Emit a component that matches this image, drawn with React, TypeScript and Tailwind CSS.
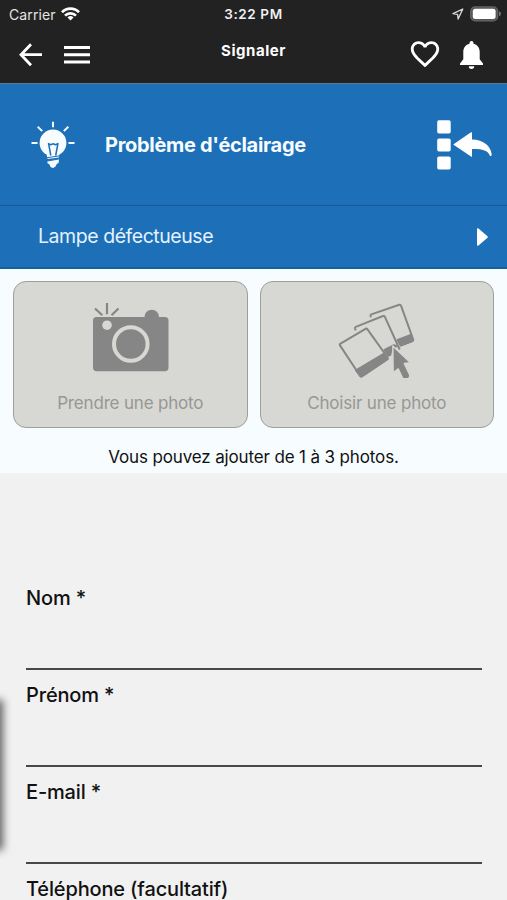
import type { ReactNode } from "react";
import { MdFavoriteBorder } from "react-icons/md";

const StatusBar = () => (
  <div className="grid h-7 grid-cols-3 items-center text-[14px] text-[#e4e4e4]">
    <div className="flex items-center gap-[5px] pl-[9px]">
      <span className="tracking-[0.1px]">Carrier</span>
      <svg width="19" height="14" viewBox="0 0 19 14" fill="none" stroke="#fff" strokeWidth="2.7">
        <path d="M1 5.2a12 12 0 0 1 17 0" />
        <path d="M4 8.6a7.8 7.8 0 0 1 11 0" />
        <path d="M9.5 13.6l-3-3.2a4.4 4.4 0 0 1 6 0z" fill="#fff" stroke="none" />
      </svg>
    </div>
    <span className="text-center text-[13.5px] font-semibold tracking-[0.6px] text-[#f0f0f0]">3:22 PM</span>
    <div className="flex items-center justify-end gap-[6px] pr-[6px]">
      <svg width="12" height="12" viewBox="0 0 12 12" fill="none" stroke="#ddd" strokeWidth="1.3" strokeLinejoin="round">
        <path d="M10.8 1L1 5.7l4.6.6.5 4.7z" />
      </svg>
      <svg width="31" height="16" viewBox="0 0 31 16">
        <rect x="0.7" y="0.9" width="27" height="14" rx="4.5" fill="#555" stroke="#666" strokeWidth="1.2" />
        <rect x="2.8" y="2.8" width="22.8" height="10.2" rx="2.5" fill="#fff" />
        <path d="M29 5.3q2 .8 2 2.5t-2 2.5z" fill="#777" />
      </svg>
    </div>
  </div>
);

const NavBar = () => (
  <div className="grid h-[55px] grid-cols-3">
    <div className="flex items-start gap-[21px] pt-[15px] pl-[19px] text-white">
      <svg width="24" height="24" viewBox="0 0 24 24" fill="none" stroke="currentColor" strokeWidth="2.8">
        <path d="M23 11.7H2.5M12 1.2L2 11.7L12 22.2" />
      </svg>
      <svg width="26" height="24" viewBox="0 0 26 24" fill="currentColor">
        <path d="M0 3h26v3H0zM0 10.2h26v3H0zM0 17.5h26v3H0z" />
      </svg>
    </div>
    <h1 className="pt-[12px] text-center text-[15px] leading-[21px] font-bold tracking-[0.55px] text-white">Signaler</h1>
    <div className="flex items-start justify-end gap-[18px] pt-[9px] pr-[24px] text-white">
      <MdFavoriteBorder size={34} />
      <svg className="mt-[4px]" width="23" height="28" viewBox="0 0 23 28" fill="currentColor">
        <path d="M11.5 0a2 2 0 0 1 2 2v.7c4 .9 6.2 4.2 6.2 8.3v7.2l3.3 4.3V24H0v-1.500l3.300-4.300V11c0-4.100 2.200-7.400 6.200-8.300V2a2 2 0 0 1 2-2z" />
        <path d="M8.8 25.2h5.4a2.7 2.7 0 0 1-5.4 0z" />
      </svg>
    </div>
  </div>
);

const BulbIcon = () => (
  <svg width="44" height="48" viewBox="0 0 44 48" fill="none">
    <path
      d="M22 .8v5.500M6.700 5.800l4.500 4.300M37.300 5.800l-4.500 4.300M.5 22h6M37.500 22h6"
      stroke="#f7fcff"
      strokeWidth="2"
    />
    <path
      d="M22 8.500a13.400 13.400 0 0 1 13.400 13.400c0 5-2.700 9.100-6.900 11.600l-.7 3-11.300 1.600-.9-4.500c-4.300-2.500-7-6.700-7-11.700A13.400 13.400 0 0 1 22 8.500z"
      fill="#f7fcff"
    />
    <path d="M17.500 22l2.300 12.500M27 22l-2.300 12.500M17.300 22.700l2.400 1 2.400-1 2.400 1 2.400-1" stroke="#1d70b7" strokeWidth="1.500" />
    <path d="M16.300 40l11.700-2.200-.3 4-1.900 1.200-1.300 2.500-2.300 1.600-2.400-.9-1.500-3-1.800-1z" fill="#f7fcff" />
    <path d="M15.500 36.800l13.300-2M15.500 40.200l13.300-2.400" stroke="#1d70b7" strokeWidth="1" />
  </svg>
);

const BackToListIcon = () => (
  <svg width="55" height="51" viewBox="0 0 55 51" fill="#fff">
    <rect x="0.2" y="1.3" width="13.5" height="13.2" rx="1.8" />
    <rect x="0.2" y="19.4" width="13.5" height="13.2" rx="1.8" />
    <rect x="0.2" y="37.4" width="13.5" height="13.2" rx="1.8" />
    <path d="M16.200 25.600L34 13.300q1-.5 1 .5v6.700c11.500.2 19.300 7 19.700 15.300q-.2 1.700-1.700 1.200C51 31 44.500 29.800 35 30v7q0 1.300-1 .6z" />
  </svg>
);

const CameraIcon = () => (
  <svg width="78" height="78" viewBox="0 0 78 78" fill="none">
    <path d="M4 8.500l7.300 6.800M16 3v11.300M27.500 8.500l-7 6.800" stroke="#868686" strokeWidth="2.2" />
    <path
      d="M5 17h48.500a7.200 7.200 0 0 1 14.500 0H74a3.500 3.500 0 0 1 3.500 3.500v47a3.800 3.800 0 0 1-3.800 3.800H5.700A3.800 3.800 0 0 1 2 67.500V20.500A3.500 3.500 0 0 1 5 17z"
      fill="#868686"
    />
    <circle cx="16" cy="25.2" r="4.8" fill="#d7d7d3" />
    <circle cx="39.800" cy="44" r="16.800" stroke="#d7d7d3" strokeWidth="4" />
  </svg>
);

const GalleryIcon = () => (
  <svg width="78" height="78" viewBox="0 0 78 78" fill="none" stroke="#868686" strokeWidth="2" strokeLinejoin="round">
    <path d="M33 17.300l-.5-1.600q-.2-1 .8-1.300L61.300 4.800q1.300-.3 1.700.8L75.200 39.500q.2 1.200-.8 1.600L62.500 45.500" />
    <path d="M59.600 40l13.200-5 2.300 5.500-12.400 5z" fill="#868686" />
    <path d="M17.700 30.300l-.7-2q-.2-1 .8-1.400L45 16q1.300-.4 1.900.8L61.700 49.500" />
    <path d="M46.500 49.800l9.500-4.600 2.500 1-4.500 1.600-1.800 7.200-2.200.5z" fill="#868686" />
    <path d="M2.500 43.700L27.500 28.800q1.300-.5 2 .6L49.600 57.500q.6 1.200-.5 2L24 76.300q-1.200.6-2-.5L2 45.400q-.6-1 .5-1.700z" />
    <path d="M18 70.300l27.300-16.300 4.400 5-26.700 17.500z" fill="#868686" />
    <path d="M54.800 46l17.700 16.700-6.300.8 5.200 10.600a3.800 3.800 0 0 1-7.200 3.200l-4-8.400-5 4z" fill="#868686" stroke="#d7d7d3" strokeWidth="1.400" />
  </svg>
);

const PhotoButton = ({ icon, label }: { icon: ReactNode; label: string }) => (
  <button className="flex h-[147px] flex-1 flex-col items-center rounded-[13px] border-[1.5px] border-[#9b9f9d] bg-[#d7d7d3] pt-[18px]">
    {icon}
    <span className="mt-[14px] text-[17px] leading-[22px] tracking-[-0.18px] text-[#969795]">{label}</span>
  </button>
);

const fields = ["Nom *", "Prénom *", "E-mail *", "Téléphone (facultatif)"];

export default function App() {
  return (
    <div className="relative flex h-[900px] w-[507px] flex-col overflow-hidden bg-[#f1f1f1] font-['Inter','Liberation_Sans',sans-serif] text-black">
      <header className="shrink-0 bg-[#222]">
        <StatusBar />
        <NavBar />
      </header>

      <section className="shrink-0 bg-[#1d70b7] text-[#f7fcff]">
        <div className="flex h-[123px] items-center border-t border-b border-t-[#587b9b] border-b-[#185a98] pr-[15px] pl-[31px]">
          <BulbIcon />
          <h2 className="ml-[30px] flex-1 text-[20px] font-bold tracking-[-0.3px]">Problème d'éclairage</h2>
          <BackToListIcon />
        </div>
        <div className="flex h-[63px] items-center justify-between border-b-2 border-[#17609f] pr-[19px] pl-[38px]">
          <span className="pt-px text-[19.5px] tracking-[-0.45px] text-[#e3f2fc]">Lampe défectueuse</span>
          <svg width="11" height="18" viewBox="0 0 11 18" fill="#fff">
            <path d="M0 1.5Q0-.5 1.5.5l9 7.7q.7.8 0 1.6l-9 7.7Q0 18.5 0 16.5z" />
          </svg>
        </div>
      </section>

      <section className="h-[204px] shrink-0 bg-[#f7fcff] px-[13px] pt-[12px]">
        <div className="flex gap-[12px]">
          <PhotoButton icon={<CameraIcon />} label="Prendre une photo" />
          <PhotoButton icon={<GalleryIcon />} label="Choisir une photo" />
        </div>
        <p className="mt-[18px] text-center text-[17px] leading-[22px] tracking-[-0.14px] text-[#111]">
          Vous pouvez ajouter de 1 à 3 photos.
        </p>
      </section>

      <form className="shrink-0 pt-[112px] pr-[25px] pl-[26px]">
        {fields.map((field) => (
          <label
            key={field}
            className="flex h-[97px] flex-col text-[20px] leading-[26px] font-medium tracking-[-0.15px] text-[#111]"
          >
            {field}
            <input className="mt-auto mb-[12px] h-[40px] w-full border-b-2 border-[#484848] bg-transparent outline-none" />
          </label>
        ))}
      </form>

      <div className="absolute top-[703px] -left-[10px] h-[144px] w-[10px] shadow-[0_0_8px_3px_rgba(0,0,0,0.6)]" />
    </div>
  );
}
